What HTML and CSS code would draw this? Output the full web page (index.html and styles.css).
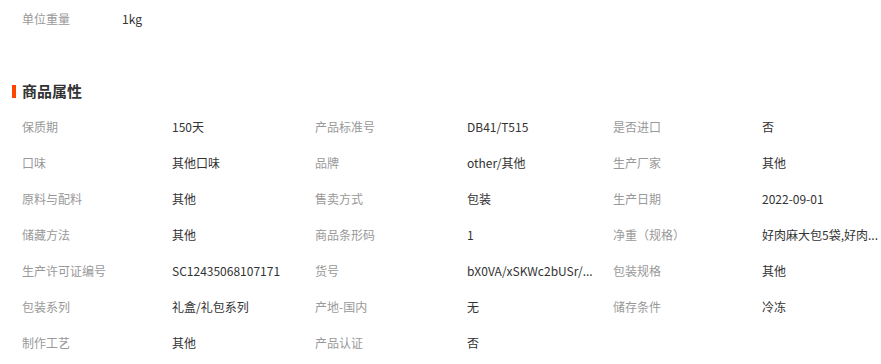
FILE: index.html
```html
<!DOCTYPE html>
<html lang="zh-CN">
<head>
<meta charset="utf-8">
<title>商品属性</title>
<link rel="stylesheet" href="styles.css">
</head>
<body>
<div class="page">
  <div class="weight-row">
    <span class="w-label">单位重量</span>
    <span class="w-value">1kg</span>
  </div>
  <h3 class="title">商品属性</h3>
  <div class="attrs">
    <span class="lab">保质期</span><span class="val">150天</span>
    <span class="lab">产品标准号</span><span class="val">DB41/T515</span>
    <span class="lab">是否进口</span><span class="val">否</span>

    <span class="lab">口味</span><span class="val">其他口味</span>
    <span class="lab">品牌</span><span class="val">other/其他</span>
    <span class="lab">生产厂家</span><span class="val">其他</span>

    <span class="lab">原料与配料</span><span class="val">其他</span>
    <span class="lab">售卖方式</span><span class="val">包装</span>
    <span class="lab">生产日期</span><span class="val">2022-09-01</span>

    <span class="lab">储藏方法</span><span class="val">其他</span>
    <span class="lab">商品条形码</span><span class="val">1</span>
    <span class="lab">净重（规格）</span><span class="val">好肉麻大包5袋,好肉...</span>

    <span class="lab">生产许可证编号</span><span class="val">SC12435068107171</span>
    <span class="lab">货号</span><span class="val">bX0VA/xSKWc2bUSr/...</span>
    <span class="lab">包装规格</span><span class="val">其他</span>

    <span class="lab">包装系列</span><span class="val">礼盒/礼包系列</span>
    <span class="lab">产地-国内</span><span class="val">无</span>
    <span class="lab">储存条件</span><span class="val">冷冻</span>

    <span class="lab">制作工艺</span><span class="val">其他</span>
    <span class="lab">产品认证</span><span class="val">否</span>
    <span class="lab"></span><span class="val"></span>
  </div>
</div>
</body>
</html>
```
FILE: styles.css
```css
html, body {
  margin: 0;
  padding: 0;
  background: #fff;
}
body {
  font-family: "Noto Sans CJK SC", "Noto Sans", sans-serif;
  font-size: 12px;
  color: #333;
}
.page {
  width: 881px;
}
.weight-row {
  display: flex;
  align-items: center;
  height: 36px;
  padding-left: 22px;
}
.w-label {
  width: 100px;
  color: #999;
}
.w-value {
  color: #333;
}
.title {
  margin: 0;
  margin-top: 37px;
  height: 36px;
  display: flex;
  align-items: center;
  padding-left: 12px;
  font-size: 15px;
  font-weight: bold;
  color: #333;
  line-height: 20px;
}
.title::before {
  content: "";
  display: block;
  width: 4px;
  height: 13px;
  background: #ff4400;
  margin-right: 6px;
}
.attrs {
  display: grid;
  grid-template-columns: 150px 143px 152px 146px 149px 119px;
  grid-auto-rows: 36px;
  padding-left: 22px;
  margin-top: -1px;
  align-items: center;
}
.lab {
  color: #999;
  white-space: nowrap;
}
.val {
  color: #333;
  white-space: nowrap;
}
```
